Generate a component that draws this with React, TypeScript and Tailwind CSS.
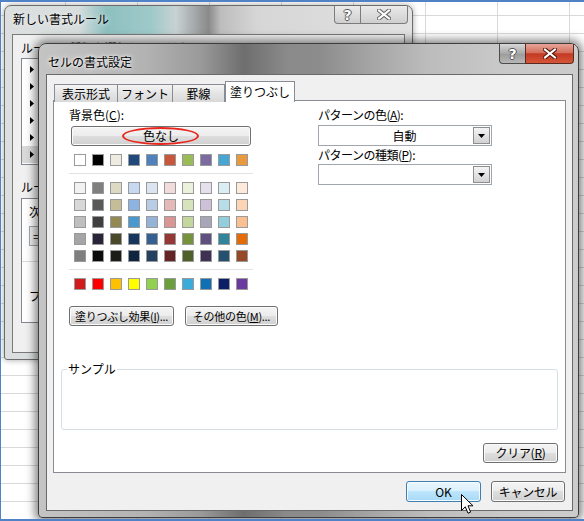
import React from "react";

const F = "font-['Noto_Sans_CJK_JP','Noto_Sans_CJK_SC',sans-serif]";

const themeRow = [
  "bg-[#ffffff]", "bg-[#000000]", "bg-[#eeece1]", "bg-[#1f497d]", "bg-[#4f81bd]",
  "bg-[#c9553a]", "bg-[#9bbb59]", "bg-[#7d6aa0]", "bg-[#46a8d2]", "bg-[#e89a3e]",
];

const tintRows = [
  ["bg-[#f2f2f2]", "bg-[#7f7f7f]", "bg-[#ddd9c3]", "bg-[#c6d9f0]", "bg-[#dbe5f1]", "bg-[#f2dcdb]", "bg-[#ebf1dd]", "bg-[#e5e0ec]", "bg-[#dbeef3]", "bg-[#fdeada]"],
  ["bg-[#d8d8d8]", "bg-[#595959]", "bg-[#c4bd97]", "bg-[#8db3e2]", "bg-[#b8cce4]", "bg-[#e5b9b7]", "bg-[#d7e3bc]", "bg-[#ccc1d9]", "bg-[#b7dde8]", "bg-[#fbd5b5]"],
  ["bg-[#bfbfbf]", "bg-[#3f3f3f]", "bg-[#938953]", "bg-[#4a98d0]", "bg-[#95b3d7]", "bg-[#d99694]", "bg-[#c3d69b]", "bg-[#a6a6b8]", "bg-[#92cddc]", "bg-[#fac08f]"],
  ["bg-[#a5a5a5]", "bg-[#2a2438]", "bg-[#4a4a2a]", "bg-[#17365d]", "bg-[#366092]", "bg-[#953734]", "bg-[#76923c]", "bg-[#5f5080]", "bg-[#31859b]", "bg-[#e36c09]"],
  ["bg-[#7f7f7f]", "bg-[#0c0c0c]", "bg-[#1d1b18]", "bg-[#0f243e]", "bg-[#244061]", "bg-[#632423]", "bg-[#4f6128]", "bg-[#3f3151]", "bg-[#255070]", "bg-[#974826]"],
];

const stdRow = [
  "bg-[#d01c1c]", "bg-[#ff0000]", "bg-[#ffc000]", "bg-[#ffff00]", "bg-[#92d050]",
  "bg-[#6a9f3c]", "bg-[#3aacdc]", "bg-[#1070b4]", "bg-[#0a1f66]", "bg-[#6a3aa0]",
];

function Sw({ c }: { c: string }) {
  return <div className={`h-3 w-3 border border-[#9a9a9a] ${c}`} />;
}

function Btn({ className = "", children }: { className?: string; children: React.ReactNode }) {
  return (
    <div
      className={`flex shrink-0 items-center justify-center rounded-[3px] border border-[#707070] bg-[linear-gradient(#f4f4f4_0%,#ececec_50%,#dedede_50%,#d0d0d0_100%)] shadow-[inset_0_0_0_1px_#fbfbfb] text-black ${className}`}
    >
      <span className="whitespace-nowrap">{children}</span>
    </div>
  );
}

function Combo({ text }: { text: string }) {
  return (
    <div className="flex h-[21px] w-[174px] items-center border border-[#a0a6ad] bg-white">
      <div className="flex-1 pl-[17px] text-center text-[12px] leading-[14px]">{text}</div>
      <div className="mr-px flex h-[17px] w-[17px] items-center justify-center border border-[#8e8e8e] bg-[linear-gradient(#f4f4f4,#d2d2d2)]">
        <svg width="7" height="4" viewBox="0 0 7 4">
          <path d="M0 0h7L3.5 4z" fill="#000" />
        </svg>
      </div>
    </div>
  );
}

function XGlyph({ dark = "#4a4a4a" }: { dark?: string }) {
  return (
    <svg width="14" height="11" viewBox="0 0 14 11">
      <path d="M2 1.5 L12 9.5 M12 1.5 L2 9.5" stroke={dark} strokeWidth="4.2" strokeLinecap="square" />
      <path d="M2 1.5 L12 9.5 M12 1.5 L2 9.5" stroke="#fff" strokeWidth="2" strokeLinecap="square" />
    </svg>
  );
}

function QGlyph() {
  return (
    <span className="font-['DejaVu_Sans',sans-serif] text-[14px] font-bold leading-none text-white [text-shadow:1px_0_#555,-1px_0_#555,0_1px_#555,0_-1px_#555]">
      ?
    </span>
  );
}

function Tri() {
  return (
    <svg width="4" height="7" viewBox="0 0 4 7">
      <path d="M0 0L4 3.5L0 7z" fill="#000" />
    </svg>
  );
}

function BackDialog() {
  const rows = [
    "セルの値に基づいてすべてのセルを書式設定",
    "指定の値を含むセルだけを書式設定",
    "上位または下位に入る値だけを書式設定",
    "平均より上または下の値だけを書式設定",
    "一意の値または重複する値だけを書式設定",
    "数式を使用して、書式設定するセルを決定",
  ];
  return (
    <div className="absolute left-[3px] top-[3px] h-[355px] w-[409px] rounded-t-[7px] rounded-b-[3px] border border-[#6c6c6c] bg-[linear-gradient(90deg,#dcdfdf_0%,#d7dddd_18%,#8ec0c0_25%,#9fc9c9_36%,#c8d2d2_42%,#8a8a8a_50%,#bdbdbd_53%,#d6d6d6_62%,#e2e2e2_100%)] shadow-[0_0_6px_rgba(0,0,0,0.35)]">
      <div className="flex h-[28px] items-start justify-between">
        <div className={`pl-[8px] pt-[6px] text-[12px] leading-[14px] text-black ${F} [text-shadow:0_0_5px_#fff]`}>
          新しい書式ルール
        </div>
        <div className="mr-[4px] flex h-[18px]">
          <div className="flex w-[27px] items-center justify-center rounded-bl-[4px] border border-t-0 border-[#7c7c7c] bg-[linear-gradient(#eaeaea,#cfcfcf)]">
            <QGlyph />
          </div>
          <div className="-ml-px flex w-[48px] items-center justify-center rounded-br-[4px] border border-t-0 border-[#7c7c7c] bg-[linear-gradient(#eaeaea,#cfcfcf)]">
            <XGlyph dark="#6a6a6a" />
          </div>
        </div>
      </div>
      <div className={`mx-[7px] h-[319px] border border-[#7a7a7a] bg-[#f0f0f0] pl-[8px] pt-[6px] text-[12px] leading-[14px] text-black ${F}`}>
        <div>ルールの種類を選択してください(<u>S</u>):</div>
        <div className="mt-[3px] h-[107px] w-[375px] border border-[#828790] bg-white pt-[2px]">
          {rows.map((r, i) => (
            <div key={i} className={`flex h-[17px] items-center pl-[8px] ${i === 5 ? "bg-[#dadada]" : ""}`}>
              <Tri />
              <span className="ml-[6px]">{r}</span>
            </div>
          ))}
        </div>
        <div className="mt-[15px]">ルールの内容を編集してください(<u>E</u>):</div>
        <div className="mt-[4px] h-[125px] w-[375px] border border-[#828790] bg-white">
          <div className="pl-[7px] pt-[6px]">次のセルのみを書式設定(<u>O</u>):</div>
          <div className="ml-[7px] mt-[7px] flex h-[20px] w-[120px] items-center border border-[#a0a6ad] bg-[#f0f0f0] pl-[3px]">=</div>
          <div className="mt-[15px] h-px w-full bg-[#dcdcdc]" />
          <div className="pl-[7px] pt-[27px]">プレビュー:</div>
        </div>
      </div>
    </div>
  );
}

function FrontDialog() {
  return (
    <div className="absolute left-[37px] top-[41px] h-[475px] w-[541px] rounded-t-[8px] rounded-b-[4px] border border-[#3e3e3e] bg-[linear-gradient(90deg,#c4c4c4_0%,#b2b2b2_20%,#9a9a9a_30%,#6e6e6e_38%,#8a8a8a_46%,#8c8c8c_52%,#a6a6a6_62%,#bcbcbc_72%,#c8c8c8_85%,#cccccc_100%)] shadow-[0_0_10px_3px_rgba(0,0,0,0.5)]">
      <div className="flex h-[30px] items-start justify-between">
        <div className={`pl-[9px] pt-[11px] text-[12px] leading-[14px] text-black ${F} [text-shadow:0_0_6px_#fff,0_0_3px_#fff]`}>
          セルの書式設定
        </div>
        <div className="mr-[4px] flex h-[20px]">
          <div className="flex w-[27px] items-center justify-center rounded-bl-[4px] border border-t-0 border-[#4c4c4c] bg-[linear-gradient(#d8d8d8,#a8a8a8_50%,#9a9a9a_51%,#b8b8b8)]">
            <QGlyph />
          </div>
          <div className="-ml-px flex w-[49px] items-center justify-center rounded-br-[4px] border border-t-0 border-[#5a2a22] bg-[linear-gradient(#e6a597_0%,#d4705e_45%,#c23a22_52%,#d65538_100%)]">
            <XGlyph dark="#5a1a10" />
          </div>
        </div>
      </div>

      <div className={`ml-[7px] mr-[5px] h-[437px] border border-[#6a6a6a] bg-[#f0f0f0] pl-[6px] pt-[6px] text-[12px] leading-[14px] text-black ${F}`}>
        {/* Tabs */}
        <div className="relative z-10 ml-px flex h-[21px] items-end">
          <div className="flex h-[18px] w-[64px] items-center justify-center border border-b-0 border-[#898c95] bg-[linear-gradient(#f4f4f4,#e4e4e4_50%,#d9d9d9)]">表示形式</div>
          <div className="-ml-px flex h-[18px] w-[56px] items-center justify-center border border-b-0 border-[#898c95] bg-[linear-gradient(#f4f4f4,#e4e4e4_50%,#d9d9d9)]">フォント</div>
          <div className="-ml-px flex h-[18px] w-[53px] items-center justify-center border border-b-0 border-[#898c95] bg-[linear-gradient(#f4f4f4,#e4e4e4_50%,#d9d9d9)]">罫線</div>
          <div className="flex h-[21px] w-[70px] items-center justify-center border border-b-0 border-[#898c95] bg-white pb-[1px]">塗りつぶし</div>
        </div>

        {/* Panel */}
        <div className="-mt-[2px] h-[373px] w-[513px] border border-[#898c95] bg-white">
          <div className="ml-[15px] flex pt-[7px]">
            {/* Left column */}
            <div className="w-[185px] shrink-0">
              <div>背景色(<u>C</u>):</div>
              <div className="relative ml-[2px] mt-[4px] w-[180px]">
                <Btn className="h-[20px] w-[180px] text-[12px] leading-[14px]">色なし</Btn>
                <div className="absolute left-[51px] top-[1px] h-[18px] w-[77px] rounded-[50%] border-2 border-[#e8261e]" />
              </div>
              <div className="ml-[5px] mt-[8px] flex gap-[6px]">
                {themeRow.map((c, i) => <Sw key={i} c={c} />)}
              </div>
              <div className="mt-[7px] h-px w-[184px] bg-[#e3e3e3]" />
              <div className="ml-[5px] mt-[8px] grid w-[174px] grid-cols-10 gap-x-[6px] gap-y-[5px]">
                {tintRows.flat().map((c, i) => <Sw key={i} c={c} />)}
              </div>
              <div className="mt-[7px] h-px w-[184px] bg-[#e3e3e3]" />
              <div className="ml-[5px] mt-[8px] flex gap-[6px]">
                {stdRow.map((c, i) => <Sw key={i} c={c} />)}
              </div>
              <div className="mt-[16px] flex w-[220px] gap-[11px]">
                <Btn className="h-[20px] w-[105px] text-[11px] leading-[14px] tracking-[-0.3px]">塗りつぶし効果(<u>I</u>)...</Btn>
                <Btn className="h-[20px] w-[93px] text-[11px] leading-[14px] tracking-[-0.3px]">その他の色(<u>M</u>)...</Btn>
              </div>
            </div>

            {/* Right column */}
            <div className="ml-[64px] w-[174px] shrink-0">
              <div className="tracking-[-0.5px]">パターンの色(<u>A</u>):</div>
              <div className="mt-[3px]"><Combo text="自動" /></div>
              <div className="mt-[2px] tracking-[-0.5px]">パターンの種類(<u>P</u>):</div>
              <div className="mt-[2px]"><Combo text="" /></div>
            </div>
          </div>

          {/* Sample */}
          <div className="relative ml-[7px] mt-[43px] h-[61px] w-[497px] rounded-[3px] border border-[#d5dfe5]">
            <span className="absolute -top-[8px] left-[5px] bg-white px-[1px]">サンプル</span>
          </div>
          <div className="ml-[7px] mt-[13px] flex w-[497px] justify-end">
            <Btn className="h-[20px] w-[75px] text-[12px] leading-[14px] tracking-[-0.3px]">クリア(<u>R</u>)</Btn>
          </div>
        </div>

        {/* OK / Cancel */}
        <div className="mr-[7px] mt-[8px] flex justify-end gap-[10px]">
          <div className="flex h-[21px] w-[75px] items-center justify-center rounded-[3px] border border-[#3c7fb1] bg-[linear-gradient(#eaf6fd_0%,#d9f0fc_50%,#bee6fd_50%,#a7d9f5_100%)] shadow-[inset_0_0_0_1px_#f5fbfe]">OK</div>
          <Btn className="h-[21px] w-[74px] text-[12px] leading-[14px] tracking-[-0.3px]">キャンセル</Btn>
        </div>
      </div>
    </div>
  );
}

export default function App() {
  return (
    <div className="relative h-[521px] w-[584px] overflow-hidden border-t-2 border-b-2 border-l border-[#4f82c6] bg-white bg-[linear-gradient(#d9d9d9_1px,transparent_1px),linear-gradient(90deg,#d9d9d9_1px,transparent_1px)] bg-size-[72px_18px] bg-position-[64px_13px]">
      <BackDialog />
      <FrontDialog />
      <svg className="absolute left-[460px] top-[492px]" width="13" height="21" viewBox="0 0 13 21">
        <path d="M0.5 0.5 L0.5 16.5 L4.3 12.8 L7 19.2 L9.6 18.1 L7 11.8 L12 11.8 Z" fill="#fff" stroke="#000" strokeWidth="1" strokeLinejoin="miter" />
      </svg>
    </div>
  );
}
